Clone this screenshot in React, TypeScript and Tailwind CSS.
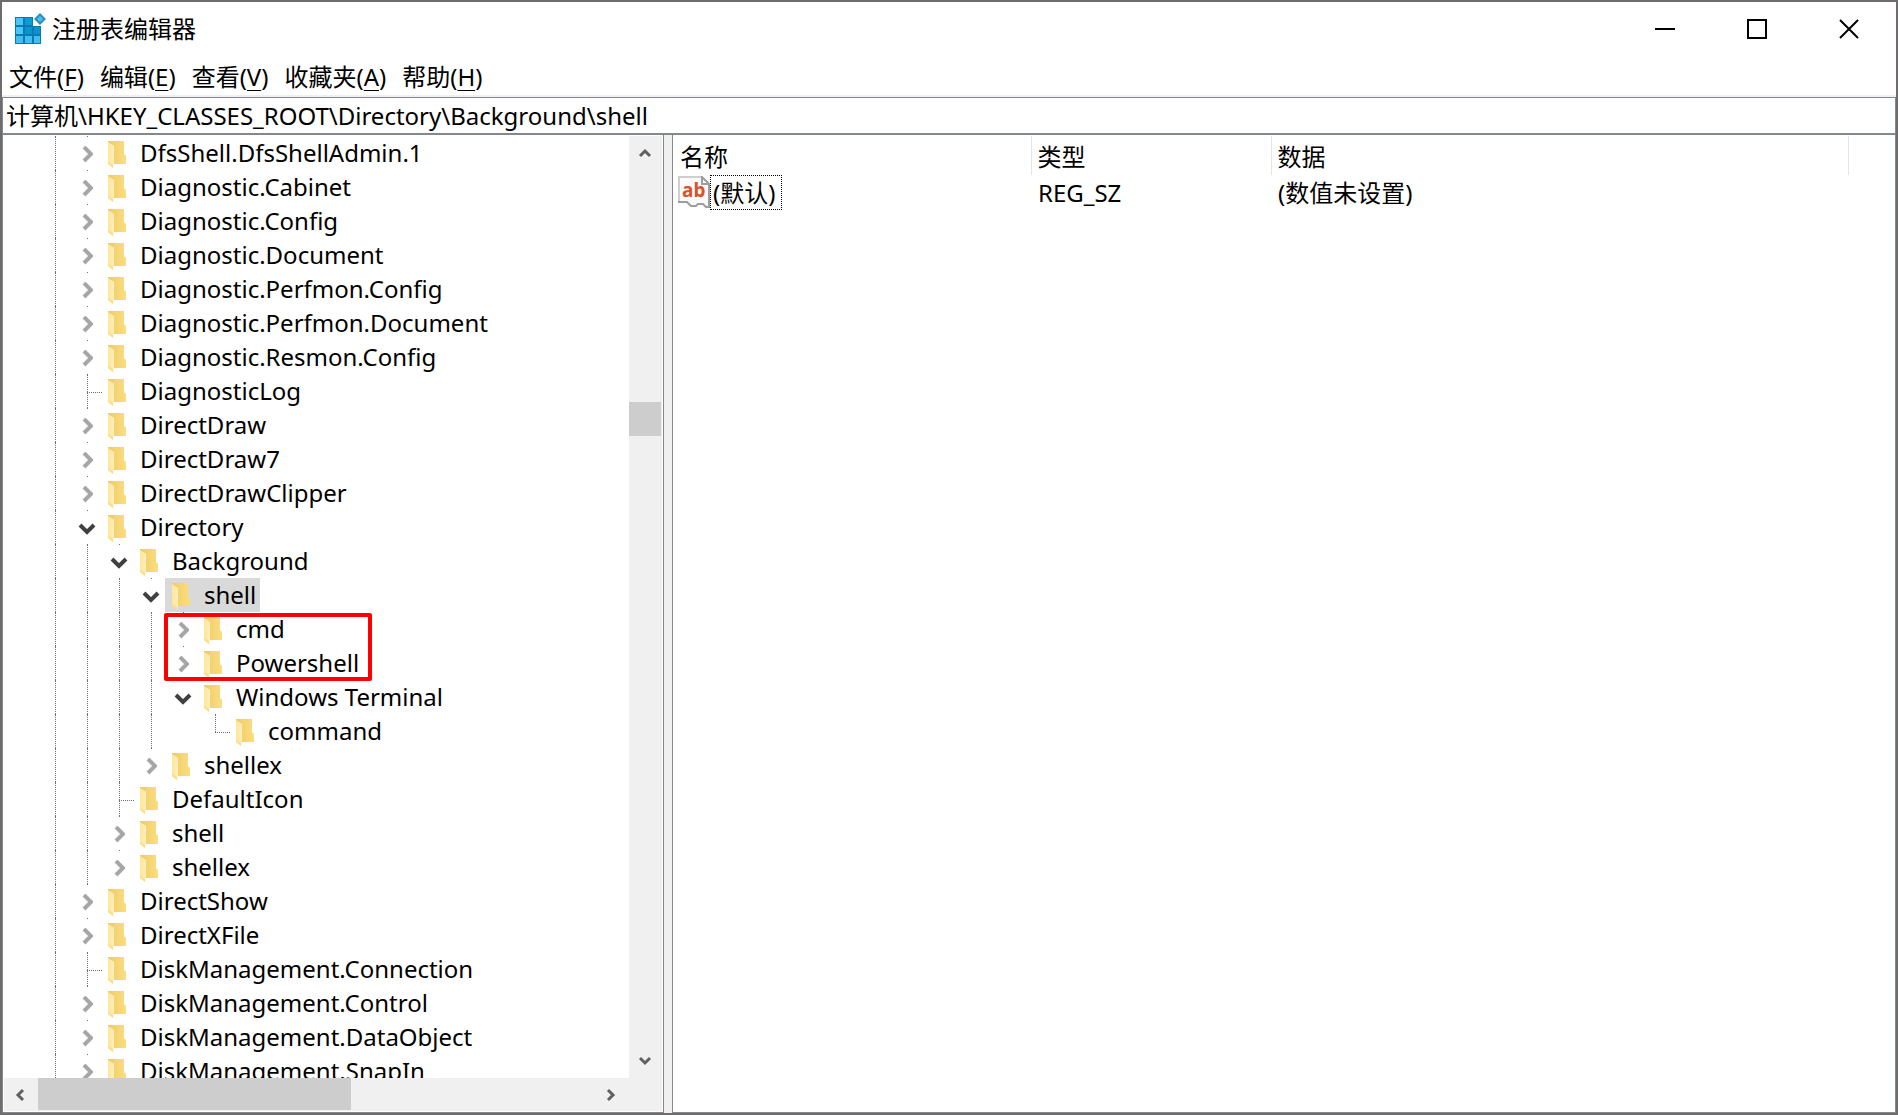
import React, { useState } from 'react';

interface RegKey {
  name: string;
  children?: RegKey[];
  hasChildren?: boolean;
  open?: boolean;
  selected?: boolean;
  highlight?: boolean; // draws the red frame over this row and the next one
}

const keys: RegKey[] = [
  { name: 'DfsShell.DfsShellAdmin.1', hasChildren: true },
  { name: 'Diagnostic.Cabinet', hasChildren: true },
  { name: 'Diagnostic.Config', hasChildren: true },
  { name: 'Diagnostic.Document', hasChildren: true },
  { name: 'Diagnostic.Perfmon.Config', hasChildren: true },
  { name: 'Diagnostic.Perfmon.Document', hasChildren: true },
  { name: 'Diagnostic.Resmon.Config', hasChildren: true },
  { name: 'DiagnosticLog' },
  { name: 'DirectDraw', hasChildren: true },
  { name: 'DirectDraw7', hasChildren: true },
  { name: 'DirectDrawClipper', hasChildren: true },
  {
    name: 'Directory',
    open: true,
    children: [
      {
        name: 'Background',
        open: true,
        children: [
          {
            name: 'shell',
            open: true,
            selected: true,
            children: [
              { name: 'cmd', hasChildren: true, highlight: true },
              { name: 'Powershell', hasChildren: true },
              { name: 'Windows Terminal', open: true, children: [{ name: 'command' }] },
            ],
          },
          { name: 'shellex', hasChildren: true },
        ],
      },
      { name: 'DefaultIcon' },
      { name: 'shell', hasChildren: true },
      { name: 'shellex', hasChildren: true },
    ],
  },
  { name: 'DirectShow', hasChildren: true },
  { name: 'DirectXFile', hasChildren: true },
  { name: 'DiskManagement.Connection' },
  { name: 'DiskManagement.Control', hasChildren: true },
  { name: 'DiskManagement.DataObject', hasChildren: true },
  { name: 'DiskManagement.SnapIn', hasChildren: true },
];

const menus = [
  { label: '文件', hotkey: 'F' },
  { label: '编辑', hotkey: 'E' },
  { label: '查看', hotkey: 'V' },
  { label: '收藏夹', hotkey: 'A' },
  { label: '帮助', hotkey: 'H' },
];

const RegeditIcon = () => (
  <svg width="32" height="32" viewBox="0 0 32 32" aria-hidden="true">
    <path d="M0 4h18v9h8v18H0z" fill="#0a7ab0" />
    <path d="M1 5h7v7H1zM1 14h7v7H1z" fill="#4cc4f5" />
    <path d="M10 5h7v7h-7z" fill="#0f9bd8" />
    <path d="M10 14h7v7h-7zM19 14h6v7h-6z" fill="#0a93cc" />
    <path d="M1 23h7v7H1zM10 23h7v7h-7zM19 23h6v7h-6z" fill="#41bdf4" />
    <path d="M25 0l6 6-6 6-6-6z" fill="#2a8fc4" />
    <path d="M25 3l3 3-3 3-3-3z" fill="#55bce8" />
  </svg>
);

const FolderIcon = () => (
  <svg width="19" height="28" viewBox="0 0 19 28" aria-hidden="true">
    <defs>
      <linearGradient id="folderBack" x1="0" x2="1">
        <stop offset="0" stopColor="#eecb67" />
        <stop offset="1" stopColor="#fbdd80" />
      </linearGradient>
      <linearGradient id="folderFront" x1="0" x2="1">
        <stop offset="0" stopColor="#ffe59a" />
        <stop offset="1" stopColor="#fff0b8" />
      </linearGradient>
    </defs>
    <path d="M0 0h16v13l2 2v8H5L0 20z" fill="url(#folderBack)" />
    <path d="M0 1l6 4v18l-1 4-5-4z" fill="url(#folderFront)" />
    <path d="M0 21l5 3v3l-5-4z" fill="#fcdf84" />
  </svg>
);

const StringValueIcon = () => (
  <svg width="32" height="33" viewBox="0 0 32 33" aria-hidden="true">
    <path d="M1 1h23l7 7v23h-3l-3-3h-5l-2 2h-5l-4-4H1z" fill="#fbfbfb" />
    <path d="M1 25V1h23" fill="none" stroke="#cfcfcf" strokeWidth="2" />
    <path d="M24 1v7h7z" fill="#fff" stroke="#9d9d9d" strokeWidth="2" />
    <path d="M31 8v23h-3l-3-3h-5l-2 2h-5l-4-4H0" fill="none" stroke="#9d9d9d" strokeWidth="2" />
    <text x="4" y="21" className="fill-[#d9532c] text-[19px] font-bold">ab</text>
  </svg>
);

// Thick chevron in front of tree items
const Chevron = ({ open }: { open: boolean }) =>
  open ? (
    <svg width="18" height="12" viewBox="0 0 18 12" fill="none" stroke="#404040" strokeWidth="4" aria-hidden="true">
      <path d="M2 2l7 7 7-7" />
    </svg>
  ) : (
    <svg width="12" height="18" viewBox="0 0 12 18" fill="none" stroke="#a6a6a6" strokeWidth="4" aria-hidden="true">
      <path d="M3 1l7 7-7 7" />
    </svg>
  );

const arrowPaths = {
  up: 'M0 9l5-5 5 5',
  down: 'M0 3l5 5 5-5',
  left: 'M8 1L3 6l5 5',
  right: 'M2 1l5 5-5 5',
};

const ScrollArrow = ({ dir, label }: { dir: keyof typeof arrowPaths; label: string }) => (
  <button aria-label={label} className="flex size-[34px] shrink-0 items-center justify-center hover:bg-[#dadada]">
    <svg width="12" height="12" viewBox="0 0 12 12" fill="none" stroke="#606060" strokeWidth="3" className="overflow-visible">
      <path d={arrowPaths[dir]} />
    </svg>
  </button>
);

interface TreeItemProps {
  item: RegKey;
  guides: boolean[];
  isLast: boolean;
}

const TreeItem: React.FC<TreeItemProps> = ({ item, guides, isLast }) => {
  const [open, setOpen] = useState(!!item.open);
  const expandable = !!item.children || !!item.hasChildren;

  return (
    <li role="treeitem" aria-expanded={expandable ? open : undefined} className="relative">
      <div className="flex h-[34px] pl-[34px] whitespace-nowrap">
        {guides.map((line, i) => (
          <div key={i} className="w-8 shrink-0 pl-[18px]">
            {line && <div className="h-full w-px border-l border-dotted border-[#707070]" />}
          </div>
        ))}

        {expandable ? (
          <button
            aria-label={item.name}
            onClick={() => setOpen(!open)}
            className="relative flex w-8 shrink-0 items-center justify-center pt-1 pl-1"
          >
            <span className="absolute top-0 left-[18px] size-px bg-[#707070]" />
            <Chevron open={open} />
          </button>
        ) : (
          <div className="relative w-8 shrink-0 pl-[18px]">
            <div className={`w-px border-l border-dotted border-[#707070] ${isLast ? 'h-[18px]' : 'h-full'}`} />
            <div className="absolute top-[18px] left-[18px] w-[15px] border-t border-dotted border-[#707070]" />
          </div>
        )}

        <span className={`flex items-center pr-1 pl-[7px] ${item.selected ? 'bg-[#d9d9d9]' : ''}`}>
          <span className="w-8 shrink-0 pt-1">
            <FolderIcon />
          </span>
          {item.name}
        </span>
      </div>

      {item.highlight && (
        <div className="pointer-events-none absolute top-px left-[161px] z-10 h-[68px] w-[208px] rounded-xs border-4 border-[#ff0000]" />
      )}

      {open && item.children && (
        <ul role="group">
          {item.children.map((child, i) => (
            <TreeItem
              key={child.name}
              item={child}
              guides={[...guides, !isLast]}
              isLast={i === item.children!.length - 1}
            />
          ))}
        </ul>
      )}
    </li>
  );
};

export default function App() {
  return (
    <div className="flex h-screen flex-col overflow-hidden border-2 border-[#6e6c6d] bg-white font-['Noto_Sans','Noto_Sans_CJK_SC',sans-serif] text-[24px] leading-[34px] text-black">
      {/* Title bar */}
      <header className="flex h-14 shrink-0 items-stretch pr-px pb-0.5">
        <div className="flex flex-1 items-center gap-[5px] pl-[13px]">
          <RegeditIcon />
          <h1>注册表编辑器</h1>
        </div>
        <button aria-label="最小化" className="flex w-[92px] items-center justify-center hover:bg-gray-200">
          <svg width="20" height="20" viewBox="0 0 20 20">
            <path d="M0 10h20" stroke="#000" strokeWidth="2" />
          </svg>
        </button>
        <button aria-label="最大化" className="flex w-[92px] items-center justify-center hover:bg-gray-200">
          <svg width="20" height="20" viewBox="0 0 20 20">
            <rect x="1" y="1" width="18" height="18" fill="none" stroke="#000" strokeWidth="2" />
          </svg>
        </button>
        <button aria-label="关闭" className="flex w-[92px] items-center justify-center hover:bg-red-500">
          <svg width="20" height="20" viewBox="0 0 20 20">
            <path d="M1 1l18 18M19 1L1 19" stroke="#000" strokeWidth="2" />
          </svg>
        </button>
      </header>

      {/* Menu bar */}
      <nav className="flex h-[39px] shrink-0 items-center border-b-2 border-[#f0f0f0]">
        {menus.map(menu => (
          <button key={menu.hotkey} className="pr-[9px] pl-[7px] hover:bg-[#e5f3ff]">
            {menu.label}(<span className="underline decoration-1 underline-offset-4">{menu.hotkey}</span>)
          </button>
        ))}
      </nav>

      {/* Address bar */}
      <input
        type="text"
        aria-label="地址"
        defaultValue="计算机\HKEY_CLASSES_ROOT\Directory\Background\shell"
        className="h-[38px] w-full shrink-0 border border-b-2 border-[#828790] px-[3px] pb-0.5 outline-none"
      />

      <div className="flex min-h-0 flex-1 bg-[#f0f0f0]">
        {/* Key tree */}
        <aside className="flex w-[662px] shrink-0 flex-col border-r border-b border-l border-[#828790] bg-white pt-px pr-px pb-px">
          <div className="flex min-h-0 flex-1">
            <ul role="tree" className="min-w-0 flex-1 overflow-hidden">
              {keys.map(item => (
                <TreeItem key={item.name} item={item} guides={[true]} isLast={false} />
              ))}
            </ul>
            <div className="flex w-[33px] shrink-0 flex-col justify-between bg-[#f0f0f0]">
              <ScrollArrow dir="up" label="向上滚动" />
              <div className="flex-1 pt-[232px]">
                <div className="h-[34px] w-8 bg-[#cdcdcd]" />
              </div>
              <ScrollArrow dir="down" label="向下滚动" />
            </div>
          </div>
          <div className="ml-px flex h-[33px] shrink-0 bg-[#f0f0f0] pr-[33px]">
            <ScrollArrow dir="left" label="向左滚动" />
            <div className="flex-1">
              <div className="h-8 w-[313px] bg-[#cdcdcd]" />
            </div>
            <ScrollArrow dir="right" label="向右滚动" />
          </div>
        </aside>

        {/* Value list */}
        <main className="ml-2 min-w-0 flex-1 border-x border-b border-[#828790] bg-white pt-px">
          <table className="w-full table-fixed border-collapse text-left">
            <colgroup>
              <col className="w-[358px]" />
              <col className="w-[240px]" />
              <col className="w-[577px]" />
              <col />
            </colgroup>
            <thead>
              <tr className="h-[39px]">
                <th className="border-r border-[#e5e5e5] pt-0.5 pr-0 pb-0 pl-[7px] font-normal">名称</th>
                <th className="border-r border-[#e5e5e5] pt-0.5 pr-0 pb-0 pl-[6px] font-normal">类型</th>
                <th className="border-r border-[#e5e5e5] pt-0.5 pr-0 pb-0 pl-[6px] font-normal">数据</th>
                <th aria-label="空" />
              </tr>
            </thead>
            <tbody>
              <tr>
                <td className="p-0 pl-[5px]">
                  <div className="flex items-center">
                    <StringValueIcon />
                    <span className="border border-dotted border-black pr-[6px] pl-0.5 leading-[33px]">(默认)</span>
                  </div>
                </td>
                <td className="p-0 pl-[7px]">REG_SZ</td>
                <td className="p-0 pl-[7px]">(数值未设置)</td>
                <td />
              </tr>
            </tbody>
          </table>
        </main>
      </div>
    </div>
  );
}
